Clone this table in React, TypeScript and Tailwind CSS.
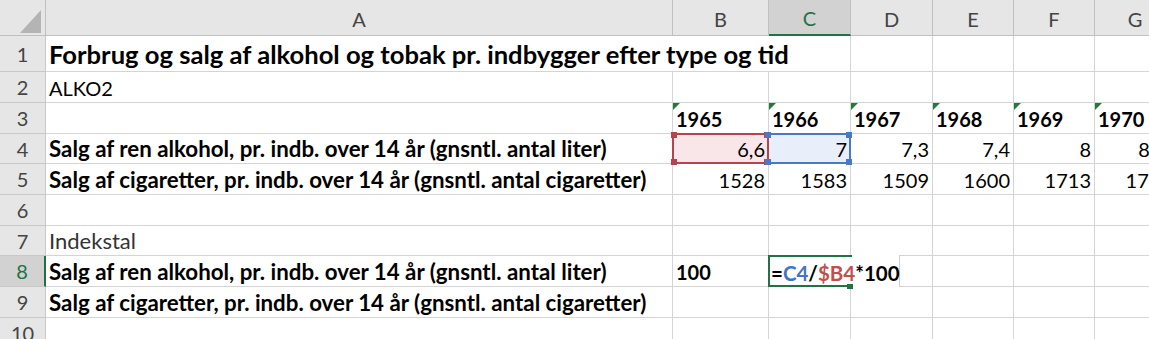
import React from "react";

const FONT = { fontFamily: "Lato, 'Noto Sans', sans-serif" };

const cols = ["A", "B", "C", "D", "E", "F", "G"];

function Tri() {
  return (
    <div className="absolute left-0 top-0 w-0 h-0 border-t-[7px] border-t-[#1e7b3c] border-r-[7px] border-r-transparent" />
  );
}

function Handles({ color }: { color: string }) {
  const base = "absolute w-[6px] h-[6px]";
  return (
    <>
      <div className={`${base} -left-[3px] -top-[3px]`} style={{ background: color }} />
      <div className={`${base} -right-[3px] -top-[3px]`} style={{ background: color }} />
      <div className={`${base} -left-[3px] -bottom-[3px]`} style={{ background: color }} />
      <div className={`${base} -right-[3px] -bottom-[3px]`} style={{ background: color }} />
    </>
  );
}

function C({
  children,
  className = "",
  span = "",
}: {
  children?: React.ReactNode;
  className?: string;
  span?: string;
}) {
  return (
    <div
      className={`relative border-r border-b border-[#d4d4d4] bg-white flex items-end pb-[2px] px-[3px] whitespace-nowrap text-[20px] leading-[24px] text-black ${span} ${className}`}
    >
      {children}
    </div>
  );
}

function RH({ n, active = false }: { n: number; active?: boolean }) {
  return (
    <div
      className={`border-b border-[#c8c8c8] flex items-center justify-center text-[20px] ${
        active
          ? "bg-[#d2d2d2] text-[#217346] border-r-2 border-r-[#217346]"
          : "bg-[#e6e6e6] text-[#444] border-r border-r-[#c8c8c8]"
      }`}
    >
      {n}
    </div>
  );
}

const LABEL = "font-bold !text-[22.3px]";

export default function App() {
  const years = ["1965", "1966", "1967", "1968", "1969", "1970"];
  return (
    <div className="w-[1149px] h-[339px] overflow-hidden bg-white" style={FONT}>
      <div className="grid grid-cols-[46px_627px_96px_82px_82px_81px_81px_81px] grid-rows-[36px_36px_31px_31px_30px_31px_31px_30px_31px_31px_31px] w-[1176px]">
        {/* header row */}
        <div className="relative bg-[#e6e6e6] border-r border-b border-[#c0c0c0]">
          <div className="absolute left-[20px] top-[10px] w-0 h-0 border-l-[21px] border-l-transparent border-b-[23px] border-b-[#b4b4b4]" />
        </div>
        {cols.map((c) => (
          <div
            key={c}
            className={`flex items-center justify-center text-[20px] pt-[2px] ${
              c === "C"
                ? "bg-[#d2d2d2] text-[#217346] border-r border-r-[#c0c0c0] border-b-2 border-b-[#217346]"
                : "bg-[#e6e6e6] text-[#444] border-r border-b border-[#c0c0c0]"
            }`}
          >
            {c}
          </div>
        ))}

        {/* row 1 */}
        <RH n={1} />
        <C span="col-span-3" className="font-bold text-[25.6px] leading-[30px] pb-[1px]">
          Forbrug og salg af alkohol og tobak pr. indbygger efter type og tid
        </C>
        <C />
        <C />
        <C />
        <C />

        {/* row 2 */}
        <RH n={2} />
        <C>ALKO2</C>
        <C />
        <C />
        <C />
        <C />
        <C />
        <C />

        {/* row 3 */}
        <RH n={3} />
        <C />
        {years.map((y) => (
          <C key={y} className="font-bold">
            <Tri />
            {y}
          </C>
        ))}

        {/* row 4 */}
        <RH n={4} />
        <C className={LABEL}>Salg af ren alkohol, pr. indb. over 14 år (gnsntl. antal liter)</C>
        <C className="justify-end !bg-[#f9e6e8]">
          <div className="absolute -left-[1px] -top-[1px] -right-[1px] -bottom-[1px] border-2 border-[#b8434f] z-10">
            <Handles color="#b8434f" />
          </div>
          6,6
        </C>
        <C className="justify-end !bg-[#e8effb]">
          <div className="absolute -left-[1px] -top-[1px] -right-[1px] -bottom-[1px] border-2 border-[#4a79c4] border-l-0 z-10">
            <Handles color="#4a79c4" />
          </div>
          7
        </C>
        <C className="justify-end">7,3</C>
        <C className="justify-end">7,4</C>
        <C className="justify-end">8</C>
        <C className="justify-end !pr-[9px]">8,8</C>

        {/* row 5 */}
        <RH n={5} />
        <C className={LABEL}>Salg af cigaretter, pr. indb. over 14 år (gnsntl. antal cigaretter)</C>
        <C className="justify-end">1528</C>
        <C className="justify-end">1583</C>
        <C className="justify-end">1509</C>
        <C className="justify-end">1600</C>
        <C className="justify-end">1713</C>
        <C className="justify-end">1722</C>

        {/* row 6 */}
        <RH n={6} />
        <C />
        <C />
        <C />
        <C />
        <C />
        <C />
        <C />

        {/* row 7 */}
        <RH n={7} />
        <C className="!text-[#333] !text-[22px]">Indekstal</C>
        <C />
        <C />
        <C />
        <C />
        <C />
        <C />

        {/* row 8 */}
        <RH n={8} active />
        <C className={LABEL}>Salg af ren alkohol, pr. indb. over 14 år (gnsntl. antal liter)</C>
        <C className="font-bold">100</C>
        <C className="font-bold z-20">
          <div className="absolute -left-[1px] -top-[1px] w-[132px] -bottom-[1px] bg-white border-r border-[#d0d0d0] flex items-end pb-[2px] px-[3px] text-[20.5px]">
            <span>=</span>
            <span className="text-[#4472c4]">C4</span>
            <span>/</span>
            <span className="text-[#c0504d]">$B4</span>
            <span>*100</span>
          </div>
          <div className="absolute -left-[1px] -top-[1px] w-[84px] -bottom-[1px] border-2 border-[#217346] border-r-0" />
          <div className="absolute -right-[3px] -bottom-[3px] w-[6px] h-[5px] bg-[#217346]" />
        </C>
        <C />
        <C />
        <C />
        <C />

        {/* row 9 */}
        <RH n={9} />
        <C className={LABEL}>Salg af cigaretter, pr. indb. over 14 år (gnsntl. antal cigaretter)</C>
        <C />
        <C />
        <C />
        <C />
        <C />
        <C />

        {/* row 10 */}
        <RH n={10} />
        <C />
        <C />
        <C />
        <C />
        <C />
        <C />
        <C />
      </div>
    </div>
  );
}
